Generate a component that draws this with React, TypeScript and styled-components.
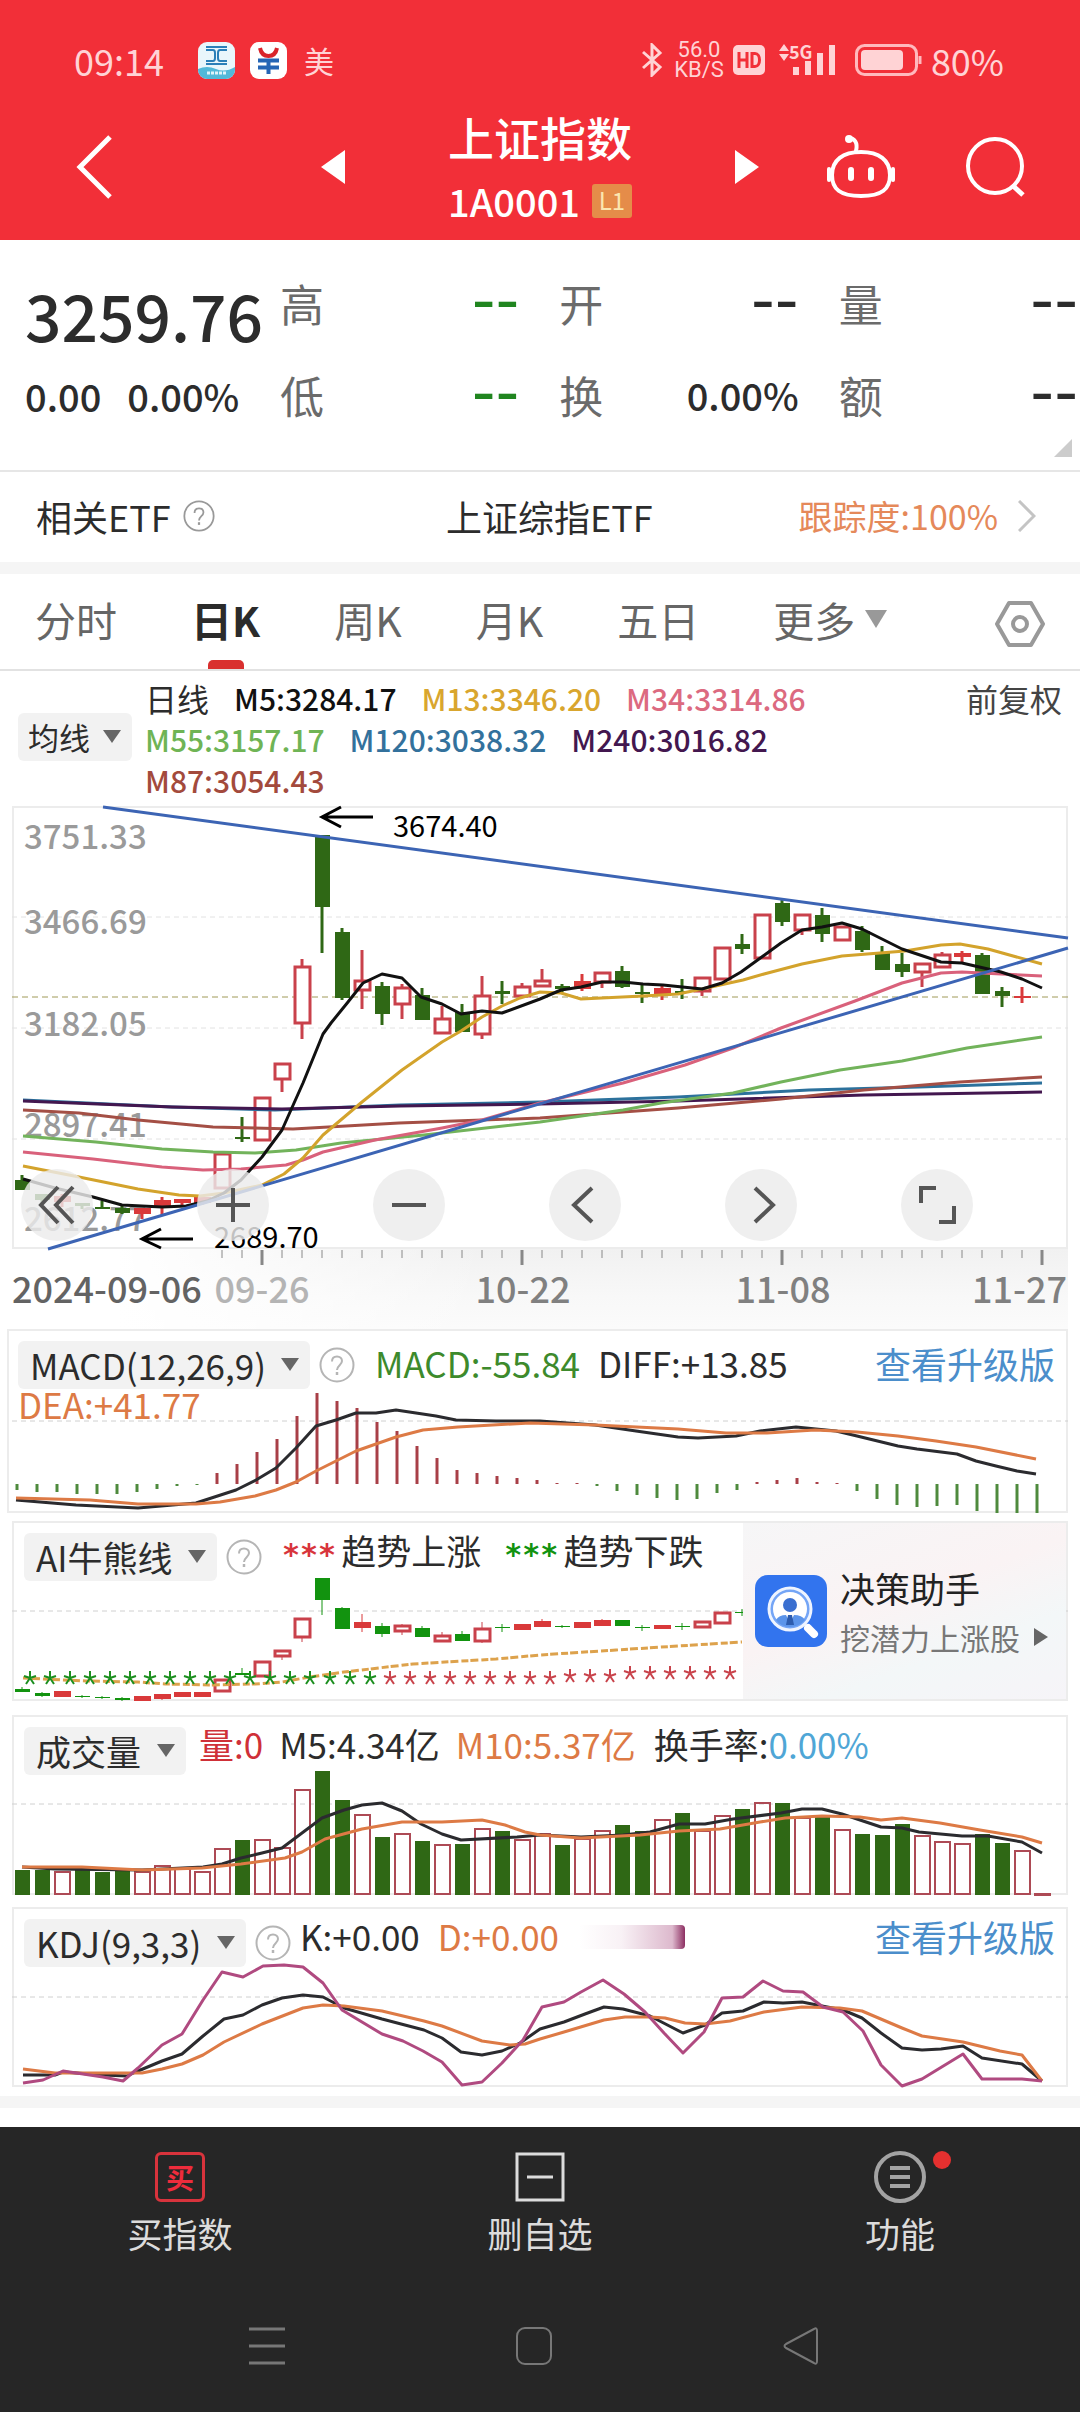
import React from "react";
import styled, { createGlobalStyle } from "styled-components";

const Global = createGlobalStyle`
  * { box-sizing: border-box; }
  body { margin: 0; background: #fff; }
  body, button, select {
    font-family: "Noto Sans CJK SC", "Noto Sans", sans-serif;
    color: #2c2c2c;
  }
  button, select { border: 0; padding: 0; background: none; cursor: pointer; }
  svg { display: block; flex: none; }
  h1, p, dl, dt, dd { margin: 0; font-weight: 400; }
`;

const RED = "#c9414b";
const GREEN = "#2f6815";
const ORANGE = "#dd7a45";
const INK = "#2b2b2f";

/* ---------- header ---------- */

const Header = styled.header`
  background: #f22f38;
  color: #fff;
  padding-top: 40px;
`;
const StatusBar = styled.div`
  display: flex;
  align-items: center;
  justify-content: space-between;
  height: 40px;
  padding: 0 76px 0 74px;
  color: #ffd3d5;
  font-size: 36px;
  line-height: 40px;
`;
const StatusGroup = styled.div<{ $gap: number }>`
  display: flex;
  align-items: center;
  gap: ${(p) => p.$gap}px;
`;
const CarrierNote = styled.span`
  font-size: 30px;
  margin-left: 2px;
`;
const Speed = styled.span`
  display: grid;
  justify-items: center;
  font-family: Roboto, sans-serif;
  font-size: 22px;
  line-height: 20px;
`;
const TitleBar = styled.div`
  display: grid;
  grid-template-columns: 1fr 438px 1fr;
  align-items: center;
  height: 160px;
  padding: 14px 55px 0;
`;
const IconButton = styled.button`
  display: grid;
  place-items: center;
  color: inherit;
`;
const TitleStart = styled.div`
  display: flex;
  padding-left: 17px;
`;
const TitleEnd = styled.div`
  display: flex;
  justify-content: flex-end;
  align-items: center;
  gap: 69px;
`;
const Switcher = styled.div`
  display: flex;
  align-items: center;
  justify-content: space-between;
`;
const TitleBlock = styled.div`
  text-align: center;
`;
const Title = styled.h1`
  && { font-weight: 500; }
  font-size: 46px;
  line-height: 68px;
`;
const Code = styled.p`
  display: flex;
  align-items: center;
  justify-content: center;
  gap: 12px;
  && { font-weight: 500; }
  font-size: 38px;
  line-height: 62px;
`;
const Level = styled.span`
  width: 40px;
  height: 34px;
  border-radius: 3px;
  background: #e58c49;
  color: #fbe6b0;
  font-size: 24px;
  line-height: 32px;
  font-weight: 400;
  text-align: center;
`;

/* ---------- quote ---------- */

const Quote = styled.section`
  position: relative;
  display: grid;
  grid-template-columns: 280px 1fr;
  height: 232px;
  padding-right: 2px;
  border-bottom: 2px solid #e6e6e6;
`;
const PriceBlock = styled.div`
  padding: 34px 0 0 25px;
  white-space: nowrap;
`;
const Price = styled.p`
  && { font-weight: 500; }
  font-size: 64px;
  line-height: 80px;
`;
const Change = styled.p`
  display: flex;
  gap: 26px;
  && { font-weight: 500; }
  font-size: 38px;
  line-height: 84px;
`;
const Metrics = styled.dl`
  display: grid;
  grid-template-columns: repeat(3, 1fr);
  grid-auto-rows: 92px;
  column-gap: 40px;
  padding-top: 17px;
`;
const Metric = styled.div`
  display: flex;
  align-items: center;
  justify-content: space-between;
`;
const MetricName = styled.dt`
  color: #6b6b6b;
  font-size: 44px;
  line-height: 60px;
`;
const MetricValue = styled.dd<{ $tone?: string }>`
  && { font-weight: 500; }
  color: ${(p) => p.$tone || "#2c2c2c"};
  font-size: 38px;
  line-height: 60px;
`;
const EmptyValue = styled(MetricValue)`
  && { font-weight: 400; }
  padding-bottom: 6px;
  font-family: "DejaVu Sans", sans-serif;
  font-size: 66px;
`;
const Corner = styled.svg`
  position: absolute;
  right: 8px;
  bottom: 13px;
`;

const EtfRow = styled.section`
  display: grid;
  grid-template-columns: 41% 1fr auto;
  align-items: center;
  height: 90px;
  padding: 0 44px 2px 36px;
  font-size: 36px;
  line-height: 50px;
`;
const EtfLabel = styled.div`
  display: flex;
  align-items: center;
  gap: 12px;
`;
const EtfLink = styled.a`
  display: flex;
  align-items: center;
  justify-content: flex-end;
  gap: 20px;
  color: #e5895a;
  font-size: 34px;
  text-decoration: none;
`;
const Band = styled.div`
  height: 12px;
  background: #f5f5f5;
`;

/* ---------- tabs ---------- */

const Tabs = styled.nav`
  display: flex;
  align-items: stretch;
  gap: 74px;
  height: 97px;
  padding: 4px 35px 0;
  border-bottom: 2px solid #e2e2e2;
`;
const Tab = styled.button<{ $on?: boolean }>`
  display: grid;
  grid-template-rows: 1fr 9px;
  justify-items: center;
  align-items: center;
  font-size: 41px;
  line-height: 60px;
  white-space: nowrap;
  font-weight: ${(p) => (p.$on ? 700 : 400)};
  color: ${(p) => (p.$on ? "#2b2b2b" : "#666")};
`;
const TabMark = styled.span`
  width: 36px;
  height: 9px;
  border-radius: 5px 5px 0 0;
  background: #d9302f;
`;
const MoreLabel = styled.span`
  display: flex;
  align-items: center;
  gap: 10px;
`;
const TabSettings = styled(IconButton)`
  margin-left: auto;
  color: #999;
`;

/* ---------- pickers ---------- */

const Picker = styled.label<{ $small?: boolean }>`
  display: grid;
  grid-template-columns: auto 40px;
  align-items: center;
  height: 48px;
  flex: none;
  border-radius: 6px;
  background: #f2f2f2;
  font-size: ${(p) => (p.$small ? 31 : 35)}px;
`;
const PickerSelect = styled.select<{ $small?: boolean }>`
  grid-area: 1 / 1 / 2 / 3;
  appearance: none;
  height: 48px;
  padding: 0 ${(p) => (p.$small ? 42 : 44)}px 0 ${(p) => (p.$small ? 10 : 12)}px;
  font-size: inherit;
  line-height: 46px;
`;
const PickerCaret = styled.svg`
  grid-area: 1 / 2;
  justify-self: center;
  pointer-events: none;
`;

/* ---------- main chart ---------- */

const Averages = styled.section`
  display: grid;
  grid-template-columns: 127px 1fr auto;
  align-items: start;
  padding: 7px 18px 5px;
`;
const PickerSlot = styled.div`
  display: flex;
  padding-top: 35px;
`;
const AverageList = styled.div`
  display: flex;
  flex-wrap: wrap;
  column-gap: 25px;
  font-size: 30px;
  font-weight: 500;
  line-height: 41px;
`;
const Tinted = styled.span<{ $tone?: string }>`
  color: ${(p) => p.$tone || "inherit"};
  white-space: nowrap;
`;
const CycleName = styled.span`
  font-size: 32px;
  font-weight: 400;
`;
const Rights = styled.button`
  color: #444;
  font-size: 32px;
  line-height: 41px;
`;
const Panel = styled.section<{ $gap?: number; $left?: number }>`
  display: grid;
  margin: ${(p) => p.$gap || 0}px 12px 0 ${(p) => p.$left || 12}px;
  border: 2px solid #ececec;
  & > * { grid-area: 1 / 1; min-width: 0; }
`;
const Plot = styled.svg`
  width: 100%;
  height: auto;
  overflow: visible;
`;
const SignalIcon = styled.svg`
  overflow: visible;
  margin-right: 8px;
`;
const ChartTools = styled.div`
  align-self: end;
  display: flex;
  gap: 104px;
  padding: 0 0 6px 7px;
  z-index: 1;
`;
const ToolButton = styled.button`
  display: grid;
  place-items: center;
  width: 72px;
  height: 72px;
  border-radius: 50%;
  background: rgba(235, 235, 235, 0.82);
  color: #555;
`;
const Axis = styled.div`
  margin: 0 12px;
  background: linear-gradient(to right, #fff 10%, rgba(255, 255, 255, 0) 45%),
    linear-gradient(#f1f1f1, #f8f8f8 60%, #fbfbfb);
`;

/* ---------- indicator panels ---------- */

const Head = styled.div<{ $x: number }>`
  display: flex;
  align-items: flex-start;
  align-self: start;
  padding: 10px 11px 0 ${(p) => p.$x}px;
  z-index: 1;
`;
const Legend = styled.div`
  flex: 1;
  display: flex;
  flex-wrap: wrap;
  align-items: flex-start;
  font-size: 35px;
`;
const HelpButton = styled(IconButton)`
  height: 48px;
  margin: 0 9px;
`;
const Value = styled.span<{ $tone?: string; $line?: number; $gap?: number }>`
  color: ${(p) => p.$tone || "#2c2c2c"};
  line-height: ${(p) => p.$line || 34}px;
  margin-left: ${(p) => p.$gap || 0}px;
  white-space: nowrap;
`;
const Stars = styled.span<{ $tone: string; $gap: number }>`
  color: ${(p) => p.$tone};
  font: 700 30px/44px "DejaVu Sans Mono", monospace;
  margin-left: ${(p) => p.$gap}px;
  margin-right: 5px;
`;
const Upgrade = styled.a<{ $line?: number }>`
  color: #4b8ecb;
  font-size: 36px;
  line-height: ${(p) => p.$line || 34}px;
  text-decoration: none;
`;
const Smudge = styled.span`
  width: 106px;
  height: 24px;
  margin: 6px 0 0 20px;
  border-radius: 4px;
  background: linear-gradient(to right, rgba(170, 80, 130, 0) 0, rgba(170, 80, 130, 0.08) 40%,
    rgba(170, 80, 130, 0.4) 88%, #8d2f62 100%);
`;
const Advice = styled.a`
  justify-self: end;
  display: grid;
  grid-template-columns: 72px 1fr;
  column-gap: 13px;
  align-items: center;
  width: 323px;
  padding: 0 0 0 12px;
  background: linear-gradient(160deg, #f6f6f7, #faf3f4 45%, #f3f7f8 70%, #f6f4f8);
  color: #222;
  text-decoration: none;
  z-index: 1;
`;
const AdviceTitle = styled.span`
  display: block;
  font-size: 35px;
  line-height: 52px;
`;
const AdviceNote = styled.span`
  display: flex;
  align-items: center;
  gap: 14px;
  color: #777;
  font-size: 30px;
  line-height: 46px;
`;

/* ---------- bottom ---------- */

const EndBand = styled(Band)`
  margin: 9px 0 19px;
`;
const Footer = styled.footer`
  background: #262626;
`;
const Actions = styled.div`
  display: grid;
  grid-template-columns: repeat(3, 1fr);
  padding-top: 24px;
`;
const Action = styled.button`
  display: grid;
  justify-items: center;
  gap: 7px;
  color: #dcdcdc;
  font-size: 35px;
  line-height: 46px;
`;
const ActionIcon = styled.span`
  position: relative;
  display: grid;
  place-items: center;
  width: 52px;
  height: 52px;
`;
const BuyMark = styled.span`
  display: grid;
  place-items: center;
  width: 50px;
  height: 50px;
  border: 3px solid #d8333c;
  border-radius: 6px;
  color: #ee2c3c;
  font-size: 28px;
  line-height: 40px;
  font-weight: 700;
`;
const Dot = styled.span`
  position: absolute;
  top: 0;
  right: -25px;
  width: 18px;
  height: 18px;
  border-radius: 50%;
  background: #e5302f;
`;
const SystemBar = styled.div`
  display: flex;
  justify-content: center;
  gap: 231px;
  padding: 71px 0 47px;
  margin-right: 12px;
  color: #777;
`;

/* ---------- chart data ---------- */

type Kind = "g" | "r" | "f";
/* kind (g falling, r rising outline, f rising solid), body top, body bottom, wick top, wick bottom */
type Candle = [Kind, number, number, number, number];

const STEP = 20;
const X0 = 22;

const daily: Candle[] = [
  ["g", 1180, 1190, 1175, 1190], ["g", 1194, 1200, 1194, 1203], ["f", 1196, 1202, 1194, 1207],
  ["g", 1203, 1206, 1203, 1209], ["g", 1207, 1209, 1201, 1209], ["g", 1208, 1213, 1206, 1214],
  ["f", 1208, 1214, 1208, 1219], ["f", 1200, 1206, 1197, 1215], ["f", 1199, 1203, 1199, 1205],
  ["f", 1197, 1203, 1197, 1205], ["r", 1153, 1189, 1153, 1189], ["g", 1137, 1139, 1117, 1142],
  ["r", 1097, 1141, 1097, 1141], ["r", 1063, 1080, 1063, 1092], ["r", 966, 1024, 959, 1039],
  ["g", 835, 907, 835, 953], ["g", 932, 998, 928, 1000], ["r", 980, 991, 950, 1009],
  ["g", 986, 1014, 982, 1025], ["r", 987, 1005, 984, 1019], ["g", 995, 1020, 988, 1020],
  ["r", 1018, 1034, 1006, 1034], ["g", 1012, 1032, 1004, 1032], ["r", 995, 1035, 976, 1039],
  ["g", 991, 994, 981, 1004], ["r", 986, 997, 983, 997], ["r", 980, 987, 969, 987],
  ["g", 986, 989, 984, 992], ["f", 981, 989, 974, 991], ["r", 972, 983, 972, 988],
  ["g", 971, 987, 966, 988], ["g", 992, 994, 984, 1003], ["f", 988, 996, 984, 1000],
  ["g", 991, 993, 979, 999], ["r", 977, 992, 977, 996], ["r", 947, 980, 947, 980],
  ["g", 944, 949, 934, 954], ["r", 914, 959, 914, 959], ["g", 903, 922, 900, 926],
  ["r", 914, 931, 914, 935], ["g", 915, 934, 908, 942], ["r", 926, 941, 926, 941],
  ["g", 931, 950, 926, 952], ["g", 952, 970, 946, 970], ["g", 964, 972, 953, 977],
  ["r", 963, 973, 963, 987], ["r", 954, 968, 952, 968], ["f", 953, 957, 951, 962],
  ["g", 955, 994, 953, 994], ["g", 991, 996, 987, 1007], ["f", 996, 998, 987, 1003],
];

const trend: Candle[] = [
  ["g", 1689, 1692, 1687, 1692], ["g", 1693, 1696, 1692, 1697], ["f", 1691, 1697, 1691, 1697],
  ["g", 1696, 1697, 1695, 1698], ["g", 1697, 1698, 1696, 1699], ["g", 1698, 1700, 1697, 1701],
  ["f", 1696, 1701, 1696, 1701], ["f", 1694, 1699, 1694, 1700], ["f", 1692, 1697, 1692, 1697],
  ["f", 1692, 1697, 1692, 1697], ["r", 1679, 1692, 1679, 1692], ["g", 1673, 1675, 1668, 1675],
  ["r", 1661, 1677, 1661, 1677], ["r", 1650, 1657, 1650, 1660], ["r", 1618, 1638, 1618, 1642],
  ["g", 1578, 1600, 1578, 1615], ["g", 1608, 1629, 1607, 1629], ["f", 1622, 1628, 1614, 1632],
  ["g", 1626, 1634, 1623, 1637], ["r", 1625, 1632, 1624, 1635], ["g", 1628, 1637, 1626, 1637],
  ["r", 1635, 1642, 1632, 1642], ["g", 1634, 1641, 1631, 1641], ["r", 1628, 1642, 1622, 1643],
  ["g", 1627, 1628, 1624, 1632], ["f", 1624, 1630, 1624, 1630], ["f", 1621, 1627, 1619, 1627],
  ["g", 1626, 1627, 1625, 1628], ["f", 1622, 1628, 1622, 1628], ["f", 1620, 1626, 1619, 1626],
  ["g", 1620, 1626, 1620, 1626], ["g", 1627, 1628, 1625, 1631], ["f", 1625, 1629, 1625, 1629],
  ["g", 1626, 1627, 1623, 1630], ["r", 1621, 1628, 1621, 1628], ["r", 1612, 1624, 1612, 1624],
  ["g", 1612, 1613, 1609, 1616],
];

const histogram = [
  1490, 1492, 1492, 1494, 1494, 1494, 1492, 1489, 1486, 1485, 1473, 1464, 1452, 1439, 1416, 1393, 1401,
  1408, 1422, 1431, 1446, 1458, 1470, 1473, 1476, 1478, 1480, 1483, 1483, 1486, 1491, 1495, 1498, 1500,
  1499, 1493, 1490, 1482, 1480, 1478, 1482, 1483, 1491, 1499, 1505, 1507, 1506, 1505, 1511, 1513, 1513, 1513,
];

const volumes =
  "g1870 g1870 r1871 g1870 g1872 g1871 r1871 r1865 r1868 r1871 r1848 g1840 r1839 r1847 r1789 g1771 g1800 r1814 g1837 r1833 g1841 r1844 g1844 r1828 g1831 r1839 r1833 g1845 r1838 r1830 g1825 g1831 r1819 g1813 r1830 r1815 g1809 r1802 g1803 r1817 g1817 r1829 g1834 g1835 g1824 r1835 r1841 r1843 g1834 g1843 r1850 r1893".split(
    " "
  );

const averageLines: [string, string][] = [
  ["#2c719c", "23,1100 172,1107 275,1110 400,1105 540,1102 678,1097 809,1090 919,1087 1042,1083"],
  ["#43174f", "23,1101 172,1107 282,1109 400,1106 540,1104 678,1101 864,1095 1042,1092"],
  ["#a44f45", "23,1110 79,1113 138,1120 213,1127 293,1129 399,1123 540,1118 678,1108 781,1099 864,1090 960,1082 1042,1077"],
  ["#72b35b", "23,1136 96,1142 162,1149 213,1152 255,1153 296,1150 341,1143 424,1135 540,1122 623,1110 661,1103 733,1093 781,1082 840,1070 902,1061 967,1048 1042,1037"],
  ["#d9617b", "23,1152 93,1159 162,1167 203,1170 241,1169 286,1165 303,1160 323,1152 375,1140 442,1128 482,1120 540,1103 623,1083 685,1065 733,1048 781,1028 855,1001 902,983 941,973 962,972 1001,974 1042,976"],
  ["#d3a32c", "23,1166 79,1177 138,1189 179,1195 200,1196 224,1193 262,1185 284,1174 303,1158 323,1135 362,1102 402,1070 442,1042 461,1031 482,1017 502,1006 520,998 540,992 561,993 581,999 643,996 678,994 702,989 743,980 764,974 802,964 842,956 905,951 941,945 960,944 988,949 1042,964"],
  ["#111", "23,1179 55,1188 93,1197 122,1205 162,1207 186,1206 207,1201 224,1193 241,1180 262,1157 282,1130 303,1083 323,1034 331,1023 348,1002 363,983 382,974 402,978 421,997 442,1004 461,1014 482,1011 502,1013 540,999 561,990 581,987 602,982 623,982 643,984 663,985 702,989 722,983 741,972 781,943 802,930 822,927 842,923 862,929 902,949 941,962 962,963 1001,972 1022,979 1042,988"],
];

const macdLines: [string, string][] = [
  [INK, "16,1500 76,1505 138,1508 196,1503 236,1490 256,1480 276,1468 296,1448 316,1426 336,1420 356,1413 376,1413 396,1410 436,1416 456,1420 496,1421 540,1421 595,1425 636,1431 678,1437 698,1438 736,1436 760,1431 796,1427 836,1431 857,1436 898,1446 917,1449 957,1454 976,1461 996,1466 1017,1471 1036,1474"],
  [ORANGE, "16,1498 90,1500 138,1504 196,1504 220,1502 255,1496 276,1490 296,1482 316,1471 356,1451 396,1437 423,1430 458,1427 530,1423 595,1425 678,1429 726,1433 767,1433 815,1430 857,1432 898,1436 936,1441 976,1447 1036,1459"],
];

const volumeLines: [string, string][] = [
  [INK, "22,1867 55,1869 142,1870 203,1867 222,1864 241,1858 262,1853 282,1848 302,1833 322,1818 344,1810 362,1805 382,1803 402,1811 421,1824 442,1834 461,1840 517,1837 540,1835 581,1837 623,1835 650,1832 679,1824 705,1824 733,1819 781,1813 802,1809 822,1809 842,1814 881,1827 902,1828 919,1832 962,1836 988,1836 1022,1842 1042,1853"],
  [ORANGE, "22,1867 82,1867 142,1870 202,1868 241,1864 285,1858 302,1852 325,1839 362,1829 402,1822 442,1822 482,1820 505,1825 525,1832 540,1835 581,1838 640,1835 679,1831 720,1829 760,1822 785,1818 822,1816 860,1817 881,1820 902,1818 940,1823 980,1830 1022,1837 1042,1843"],
];

const kdjLines: [string, string][] = [
  [INK, "23,2075 55,2075 63,2072 103,2075 127,2076 138,2071 162,2061 182,2054 203,2036 224,2019 243,2015 262,2005 282,1998 303,1995 323,1997 344,2008 382,2019 424,2030 442,2038 461,2052 482,2055 502,2051 520,2043 540,2029 564,2022 585,2014 604,2007 623,2009 650,2016 683,2033 705,2025 722,2013 743,2011 764,2002 783,2003 802,2002 822,2006 843,2010 862,2018 881,2033 902,2048 922,2050 941,2049 963,2046 982,2058 1022,2064 1042,2081"],
  [ORANGE, "23,2069 55,2073 127,2073 142,2073 162,2069 182,2064 203,2055 224,2042 262,2024 303,2008 323,2005 344,2006 382,2011 424,2021 442,2026 482,2041 510,2045 525,2044 540,2039 564,2032 604,2020 625,2017 650,2017 665,2018 685,2023 705,2024 730,2021 764,2012 802,2007 840,2008 862,2011 902,2028 922,2036 963,2042 1000,2051 1022,2055 1042,2081"],
  ["#b04a80", "23,2083 43,2080 63,2071 83,2074 103,2077 123,2081 138,2068 162,2045 182,2034 203,2000 222,1972 243,1977 263,1966 284,1965 303,1967 323,1983 342,2010 382,2034 403,2041 423,2051 442,2062 462,2085 482,2082 502,2063 523,2040 542,2007 564,2002 581,1992 603,1980 624,1994 645,2012 664,2033 683,2053 704,2032 722,1998 743,1997 763,1981 783,1991 803,1992 823,2007 843,2012 863,2031 881,2065 902,2086 922,2079 963,2054 982,2079 1022,2079 1042,2081"],
];

const priceLabels: [string, number][] = [
  ["3751.33", 849], ["3466.69", 934], ["3182.05", 1036], ["2897.41", 1137], ["2612.77", 1231],
];

/* ---------- chart parts ---------- */

function Lines({ data, width }: { data: [string, string][]; width: number }) {
  return (
    <g fill="none" strokeWidth={width} strokeLinejoin="round">
      {data.map(([c, pts]) => (
        <polyline key={c} points={pts} stroke={c} />
      ))}
    </g>
  );
}

function Candles({ data, green, thin }: { data: Candle[]; green: string; thin?: boolean }) {
  return (
    <g>
      {data.map(([k, t, b, hi, lo], i) => {
        const x = X0 + i * STEP;
        const c = k === "g" ? green : k === "f" ? "#d9393a" : RED;
        return (
          <g key={i} stroke={c} strokeWidth={thin ? 1 : 3}>
            {hi < t && <line x1={x} x2={x} y1={hi} y2={t} />}
            {lo > b && <line x1={x} x2={x} y1={b} y2={lo} />}
            {k === "r" ? (
              <rect x={x - 7} y={t + 1} width="15" height={b - t - 2} fill="#fff" strokeWidth="3" />
            ) : (
              <rect x={x - (k === "f" ? 8 : 7)} y={t} width={k === "f" ? 17 : 15} height={b - t} fill={c} stroke="none" />
            )}
          </g>
        );
      })}
    </g>
  );
}

function Rule({ y, color = "#d0d0d0", dash = "5 4" }: { y: number; color?: string; dash?: string }) {
  return <line x1="12" x2="1068" y1={y} y2={y} stroke={color} strokeDasharray={dash} />;
}

function Star({ x, y, color }: { x: number; y: number; color: string }) {
  return (
    <path
      d={`M${x} ${y}V${y - 7}M${x} ${y}l6 -2M${x} ${y}l4 6M${x} ${y}l-4 6M${x} ${y}l-6 -2`}
      stroke={color}
      strokeWidth="2"
      fill="none"
    />
  );
}

function Caret({ w = 18, h = 14, color = "#666" }: { w?: number; h?: number; color?: string }) {
  return (
    <svg width={w} height={h} viewBox="0 0 18 14" preserveAspectRatio="none" aria-hidden="true">
      <path d="M0 0H18L9 14Z" fill={color} />
    </svg>
  );
}

function Help({ size = 36, color = "#b5b5b5" }: { size?: number; color?: string }) {
  return (
    <svg width={size} height={size} viewBox="0 0 36 36" fill="none" stroke={color} strokeWidth="2" aria-hidden="true">
      <circle cx="18" cy="18" r="16.5" />
      <path d="M13 14.5c0-3 2-5 5-5s5 2 5 4.6c0 4-5 4.4-5 9" />
      <path d="M18 25v3" strokeWidth="2.5" />
    </svg>
  );
}

function Choice({ text, label, small }: { text: string; label: string; small?: boolean }) {
  return (
    <Picker $small={small}>
      <PickerSelect $small={small} aria-label={label} defaultValue={text}>
        <option>{text}</option>
      </PickerSelect>
      <PickerCaret width="18" height="14" viewBox="0 0 18 14" aria-hidden="true">
        <path d="M0 0H18L9 13Z" fill="#666" />
      </PickerCaret>
    </Picker>
  );
}

/* ---------- sections ---------- */

function TopBar() {
  return (
    <Header>
      <StatusBar>
        <StatusGroup $gap={34}>
          <span>09:14</span>
          <StatusGroup $gap={15}>
            <svg width="37" height="37" viewBox="0 0 37 37" aria-hidden="true">
              <rect width="37" height="37" rx="9" fill="#e9f6fb" />
              <path d="M0 27q9-4 18 0t19-2v3a9 9 0 0 1-9 9H9a9 9 0 0 1-9-9z" fill="#52b9d9" />
              <path d="M8 5h21M8 8h7q2 0 2 3v5q0 3-2 3H8M29 8h-7q-2 0-2 3v5q0 3 2 3h7M8 22h21" fill="none" stroke="#2b7fb8" strokeWidth="2" />
              <path d="M9 31h19" stroke="#dff4fa" strokeWidth="3" strokeDasharray="3 1" />
            </svg>
            <svg width="37" height="37" viewBox="0 0 37 37" fill="none" aria-hidden="true">
              <rect width="37" height="37" rx="9" fill="#fff" />
              <path d="M10 6c1 5 4 8 8.5 8S26 11 27 6" stroke="#d9242b" strokeWidth="4" />
              <path d="M8 18.5h21M8 25.5h21M18.5 18v14" stroke="#2565b5" strokeWidth="4" />
            </svg>
            <CarrierNote>美</CarrierNote>
          </StatusGroup>
        </StatusGroup>
        <StatusGroup $gap={9}>
          <svg width="26" height="34" viewBox="0 0 26 34" fill="none" stroke="currentColor" strokeWidth="3" aria-hidden="true">
            <path d="M4 9l17 15-8 8V2l8 8L4 25" />
          </svg>
          <Speed>
            <span>56.0</span>
            <span>KB/S</span>
          </Speed>
          <svg width="32" height="30" viewBox="0 0 32 30" aria-hidden="true">
            <rect width="32" height="30" rx="5" fill="#ffd3d5" />
            <path d="M6 7v16M14 7v16M6 15h8M19 8.5v13h3c6 0 6-13 0-13z" stroke="#f22f38" strokeWidth="3" fill="none" />
          </svg>
          <SignalIcon width="64" height="34" viewBox="0 0 64 34" aria-hidden="true">
            <path d="M5 8l5-7 5 7zM5 11l5 7 5-7z" fill="#ffd3d5" />
            <text x="15" y="16" fontSize="18" fontWeight="700" fill="#ffd3d5">5G</text>
            <path d="M22 24v8M34 18v14M46 10v22M58 2v30" stroke="#ffd3d5" strokeWidth="6" strokeLinecap="butt" />
          </SignalIcon>
          <svg width="67" height="32" viewBox="0 0 67 32" fill="none" aria-hidden="true">
            <rect x="1.5" y="1.5" width="60" height="29" rx="8" stroke="#ffb9bd" strokeWidth="3" />
            <rect x="6" y="6" width="42" height="20" rx="4" fill="#ffd3d5" />
            <path d="M65 12v8" stroke="#ffb9bd" strokeWidth="3" />
          </svg>
          <span>80%</span>
        </StatusGroup>
      </StatusBar>
      <TitleBar>
        <TitleStart>
          <IconButton aria-label="返回">
            <svg width="44" height="66" viewBox="0 0 44 66" fill="none" stroke="#fff" strokeWidth="5" aria-hidden="true">
              <path d="M38 3L8 33l30 30" />
            </svg>
          </IconButton>
        </TitleStart>
        <Switcher>
          <IconButton aria-label="上一个">
            <svg width="24" height="34" viewBox="0 0 24 34" aria-hidden="true"><path d="M24 0V34L0 17Z" fill="#fff" /></svg>
          </IconButton>
          <TitleBlock>
            <Title>上证指数</Title>
            <Code>1A0001<Level>L1</Level></Code>
          </TitleBlock>
          <IconButton aria-label="下一个">
            <svg width="24" height="34" viewBox="0 0 24 34" aria-hidden="true"><path d="M0 0V34L24 17Z" fill="#fff" /></svg>
          </IconButton>
        </Switcher>
        <TitleEnd>
          <IconButton aria-label="智能助手">
            <svg width="70" height="64" viewBox="0 0 70 64" fill="none" stroke="#fff" strokeWidth="4" strokeLinecap="round" aria-hidden="true">
              <path d="M22 3c7 0 10 5 8 13" />
              <circle cx="23" cy="4" r="2" fill="#fff" />
              <path d="M35 17c18 0 29 8 29 23 0 14-8 21-29 21S6 54 6 40c0-15 11-23 29-23z" />
              <path d="M3 34v11M67 34v11" />
              <path d="M25 35v8M45 35v8" strokeWidth="6" />
            </svg>
          </IconButton>
          <IconButton aria-label="搜索">
            <svg width="60" height="60" viewBox="0 0 60 60" fill="none" stroke="#fff" strokeWidth="4" aria-hidden="true">
              <circle cx="30" cy="29" r="27" />
              <path d="M47 48l11 10" strokeWidth="5" />
            </svg>
          </IconButton>
        </TitleEnd>
      </TitleBar>
    </Header>
  );
}

const metrics: { name: string; value: string; tone?: string }[] = [
  { name: "高", value: "--", tone: "#20851f" },
  { name: "开", value: "--" },
  { name: "量", value: "--" },
  { name: "低", value: "--", tone: "#20851f" },
  { name: "换", value: "0.00%" },
  { name: "额", value: "--" },
];

function QuoteBoard() {
  return (
    <>
      <Quote>
        <PriceBlock>
          <Price>3259.76</Price>
          <Change><span>0.00</span><span>0.00%</span></Change>
        </PriceBlock>
        <Metrics>
          {metrics.map((m) => {
            const Cell = m.value === "--" ? EmptyValue : MetricValue;
            return (
              <Metric key={m.name}>
                <MetricName>{m.name}</MetricName>
                <Cell $tone={m.tone}>{m.value}</Cell>
              </Metric>
            );
          })}
        </Metrics>
        <Corner width="18" height="18" aria-hidden="true"><path d="M18 0V18H0Z" fill="#ccc" /></Corner>
      </Quote>
      <EtfRow>
        <EtfLabel>
          相关ETF
          <IconButton aria-label="说明"><Help size={32} color="#999" /></IconButton>
        </EtfLabel>
        <span>上证综指ETF</span>
        <EtfLink href="#etf">
          跟踪度:100%
          <svg width="18" height="32" viewBox="0 0 18 32" fill="none" stroke="#c4c4c4" strokeWidth="3" aria-hidden="true">
            <path d="M1 1l15 15L1 31" />
          </svg>
        </EtfLink>
      </EtfRow>
      <Band />
    </>
  );
}

function Periods() {
  return (
    <Tabs>
      {["分时", "日K", "周K", "月K", "五日"].map((t) => (
        <Tab key={t} $on={t === "日K"}>
          {t}
          {t === "日K" && <TabMark />}
        </Tab>
      ))}
      <Tab>
        <MoreLabel>更多<Caret w={22} h={18} color="#999" /></MoreLabel>
      </Tab>
      <TabSettings aria-label="图表设置">
        <svg width="50" height="46" viewBox="0 0 50 46" fill="none" stroke="currentColor" strokeWidth="4" strokeLinejoin="round" aria-hidden="true">
          <path d="M14 2h22l12 21-12 21H14L2 23z" />
          <circle cx="25" cy="23" r="7" />
        </svg>
      </TabSettings>
    </Tabs>
  );
}

const tools: [string, string][] = [
  ["后退", "M37 18L20 36l17 18M52 18L35 36l17 18"],
  ["放大", "M19 36h34M36 19v34"],
  ["缩小", "M19 36h34"],
  ["左移", "M43 19L25 36l18 17"],
  ["右移", "M30 19l18 17-18 17"],
  ["全屏", "M35 19H20v15M53 37v16H38"],
];

function PriceChart() {
  return (
    <>
      <Averages>
        <PickerSlot><Choice text="均线" label="均线类型" small /></PickerSlot>
        <AverageList>
          <CycleName>日线</CycleName>
          <Tinted $tone="#111">M5:3284.17</Tinted>
          <Tinted $tone="#d9a62e">M13:3346.20</Tinted>
          <Tinted $tone="#dc6a80">M34:3314.86</Tinted>
          <Tinted $tone="#6fb455">M55:3157.17</Tinted>
          <Tinted $tone="#33719c">M120:3038.32</Tinted>
          <Tinted $tone="#43174f">M240:3016.82</Tinted>
          <Tinted $tone="#a34a3c">M87:3054.43</Tinted>
        </AverageList>
        <Rights>前复权</Rights>
      </Averages>
      <Panel>
        <Plot viewBox="14 808 1052 439" role="img" aria-label="日K线图">
          {[917, 1028, 1139].map((y) => <Rule key={y} y={y} color="#e2e2e2" />)}
          <Rule y={997} color="#a09a58" dash="6 4" />
          <g fontSize="33" fontWeight="500" fill="#9a9a9a">
            {priceLabels.map(([t, y]) => <text key={t} x="24" y={y}>{t}</text>)}
          </g>
          <Candles data={daily} green={GREEN} />
          <Lines data={averageLines} width={3} />
          <path d="M103 807L1068 938M48 1249L1068 948" stroke="#3c64b4" strokeWidth="3" fill="none" />
          <g stroke="#000" strokeWidth="3" fill="none">
            <path d="M341 807L322 817l19 10M322 817H373" />
            <path d="M161 1229l-19 10 19 9M142 1239H193" />
          </g>
          <g fontSize="29" fill="#000">
            <text x="393" y="837">3674.40</text>
            <text x="214" y="1248">2689.70</text>
          </g>
        </Plot>
        <ChartTools>
          {tools.map(([name, d]) => (
            <ToolButton key={name} aria-label={name}>
              <svg width="72" height="72" viewBox="0 0 72 72" fill="none" stroke="currentColor" strokeWidth="4" aria-hidden="true">
                <path d={d} />
              </svg>
            </ToolButton>
          ))}
        </ChartTools>
      </Panel>
      <Axis>
        <Plot viewBox="12 1249 1056 80" role="img" aria-label="日期">
          {Array.from({ length: 42 }, (_, i) => {
            const major = (i + 10 - 12) % 13 === 0;
            const x = 222 + i * STEP;
            return (
              <line key={i} x1={x} x2={x} y1="1250" y2={major ? 1265 : 1258} stroke="#888" strokeWidth={major ? 3 : 1} />
            );
          })}
          <g fontSize="36" fill="#808080" fontWeight="500">
            <text x="12" y="1303" fill="#636363">2024-09-06</text>
            <text x="262" y="1303" textAnchor="middle" fill="#b4b4b4">09-26</text>
            <text x="523" y="1303" textAnchor="middle">10-22</text>
            <text x="783" y="1303" textAnchor="middle">11-08</text>
            <text x="1067" y="1303" textAnchor="end">11-27</text>
          </g>
        </Plot>
      </Axis>
    </>
  );
}

function MacdPanel() {
  return (
    <Panel $left={7}>
      <Plot viewBox="9 1331 1057 180" role="img" aria-label="MACD">
        <Rule y={1421} />
        <g strokeWidth="3">
          {histogram.map((y, i) => {
            const x = 17 + i * STEP;
            return <line key={i} x1={x} x2={x} y1={1484} y2={y} stroke={y < 1484 ? "#a83f47" : "#4e8a3d"} />;
          })}
        </g>
        <Lines data={macdLines} width={3} />
      </Plot>
      <Head $x={9}>
        <Legend>
          <Choice text="MACD(12,26,9)" label="指标" />
          <HelpButton aria-label="MACD说明"><Help /></HelpButton>
          <Value $tone="#3d8a2c" $line={44} $gap={11}>MACD:-55.84</Value>
          <Value $line={44} $gap={18}>DIFF:+13.85</Value>
          <Value $tone={ORANGE} $line={30}>DEA:+41.77</Value>
        </Legend>
        <Upgrade href="#macd" $line={44}>查看升级版</Upgrade>
      </Head>
    </Panel>
  );
}

function TrendPanel() {
  return (
    <Panel $gap={8}>
      <Plot viewBox="14 1523 1052 176" role="img" aria-label="AI牛熊线">
        <Rule y={1611} />
        <Candles data={trend} green="#12930f" thin />
        <polyline
          points="23,1678 86,1681 138,1682 165,1684 213,1685 255,1684 282,1682 310,1677 344,1672 413,1664 496,1659 540,1655 616,1650 678,1646 742,1642"
          fill="none" stroke="#dda24c" strokeWidth="3" strokeDasharray="7 2 8 3"
        />
        {Array.from({ length: 36 }, (_, i) => (
          <Star key={i} x={30 + i * STEP} y={i > 29 ? 1673 : i > 26 ? 1676 : 1678} color={i < 18 ? "#1c8f1f" : "#c9434b"} />
        ))}
      </Plot>
      <Head $x={10}>
        <Legend>
          <Choice text="AI牛熊线" label="指标" />
          <HelpButton aria-label="AI牛熊线说明"><Help /></HelpButton>
          <Stars $tone="#d8343c" $gap={11}>***</Stars>
          <Value>趋势上涨</Value>
          <Stars $tone="#12930f" $gap={23}>***</Stars>
          <Value>趋势下跌</Value>
        </Legend>
      </Head>
      <Advice href="#advice">
        <svg width="72" height="72" viewBox="0 0 72 72" aria-hidden="true">
          <rect width="72" height="72" rx="13" fill="#3274ee" />
          <circle cx="35" cy="34" r="21" fill="#74a5f6" stroke="#eef4ff" strokeWidth="3" />
          <circle cx="35" cy="34" r="17" fill="#fff" />
          <circle cx="35" cy="30" r="7" fill="#3a6fd0" />
          <path d="M21 45q3-5 10-5l4 8 4-8q8 0 11 5-6 7-15 7t-14-7z" fill="#5b94ea" />
          <path d="M33 40h4l2 10h-8z" fill="#2d5cae" />
          <path d="M53 53l6 6" stroke="#fff" strokeWidth="8" strokeLinecap="round" />
        </svg>
        <span>
          <AdviceTitle>决策助手</AdviceTitle>
          <AdviceNote>
            挖潜力上涨股
            <svg width="14" height="18" viewBox="0 0 14 18" aria-hidden="true"><path d="M0 0L14 9L0 18Z" fill="#666" /></svg>
          </AdviceNote>
        </span>
      </Advice>
    </Panel>
  );
}

function VolumePanel() {
  return (
    <Panel $gap={14}>
      <Plot viewBox="14 1717 1052 176" role="img" aria-label="成交量">
        <Rule y={1804} />
        {volumes.map((v, i) => {
          const x = X0 + i * STEP;
          const y = Number(v.slice(1));
          return v[0] === "g" ? (
            <rect key={i} x={x - 7} y={y} width="15" height={1895 - y} fill={GREEN} />
          ) : (
            <rect key={i} x={x - 7} y={y + 1} width="15" height={Math.max(1, 1893 - y)} fill="none" stroke="#ad4a55" strokeWidth="2" />
          );
        })}
        <Lines data={volumeLines} width={3} />
      </Plot>
      <Head $x={10}>
        <Legend>
          <Choice text="成交量" label="指标" />
          <Value $tone="#cf3038" $gap={13}>量:0</Value>
          <Value $gap={16}>M5:4.34亿</Value>
          <Value $gap={16} $tone={ORANGE}>M10:5.37亿</Value>
          <Value $gap={18}>换手率:<Tinted $tone="#4fa6d6">0.00%</Tinted></Value>
        </Legend>
      </Head>
    </Panel>
  );
}

function KdjPanel() {
  return (
    <Panel $gap={12}>
      <Plot viewBox="14 1909 1052 176" role="img" aria-label="KDJ">
        <Rule y={1997} />
        <Lines data={kdjLines} width={3} />
      </Plot>
      <Head $x={10}>
        <Legend>
          <Choice text="KDJ(9,3,3)" label="指标" />
          <HelpButton aria-label="KDJ说明"><Help /></HelpButton>
          <Value>K:+0.00</Value>
          <Value $gap={18} $tone={ORANGE}>D:+0.00</Value>
          <Smudge />
        </Legend>
        <Upgrade href="#kdj">查看升级版</Upgrade>
      </Head>
    </Panel>
  );
}

function BottomBars() {
  return (
    <Footer>
      <Actions>
        <Action>
          <ActionIcon><BuyMark>买</BuyMark></ActionIcon>
          买指数
        </Action>
        <Action>
          <ActionIcon>
            <svg width="50" height="50" viewBox="0 0 50 50" fill="none" stroke="#dcdcdc" strokeWidth="3" aria-hidden="true">
              <rect x="2" y="2" width="46" height="46" />
              <path d="M12 25h26" />
            </svg>
          </ActionIcon>
          删自选
        </Action>
        <Action>
          <ActionIcon>
            <svg width="52" height="52" viewBox="0 0 52 52" fill="none" stroke="#a3a3a3" strokeWidth="4" aria-hidden="true">
              <circle cx="26" cy="26" r="24" />
              <path d="M16 17h20M16 26h20M16 35h20" />
            </svg>
            <Dot />
          </ActionIcon>
          功能
        </Action>
      </Actions>
      <SystemBar>
        <IconButton aria-label="最近任务">
          <svg width="36" height="38" viewBox="0 0 36 38" stroke="currentColor" strokeWidth="3" aria-hidden="true">
            <path d="M0 2h36M0 19h36M0 36h36" />
          </svg>
        </IconButton>
        <IconButton aria-label="主屏幕">
          <svg width="36" height="38" viewBox="0 0 36 38" fill="none" stroke="currentColor" strokeWidth="2" aria-hidden="true">
            <rect x="1" y="1" width="34" height="36" rx="8" />
          </svg>
        </IconButton>
        <IconButton aria-label="后退">
          <svg width="36" height="38" viewBox="0 0 36 38" fill="none" stroke="currentColor" strokeWidth="2" strokeLinejoin="round" aria-hidden="true">
            <path d="M31 2q3-2 3 2v30q0 4-3 2L3 21q-3-2 0-4z" />
          </svg>
        </IconButton>
      </SystemBar>
    </Footer>
  );
}

export default function App() {
  return (
    <>
      <Global />
      <TopBar />
      <main>
        <QuoteBoard />
        <Periods />
        <PriceChart />
        <MacdPanel />
        <TrendPanel />
        <VolumePanel />
        <KdjPanel />
        <EndBand />
      </main>
      <BottomBars />
    </>
  );
}
